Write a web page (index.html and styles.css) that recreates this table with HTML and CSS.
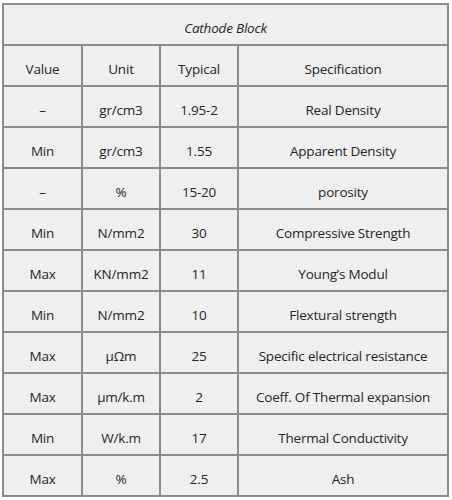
FILE: index.html
```html
<!DOCTYPE html>
<html lang="en">
<head>
  <meta charset="UTF-8">
  <meta name="viewport" content="width=device-width, initial-scale=1.0">
  <title>Cathode Block</title>
  <link rel="stylesheet" href="styles.css">
</head>
<body>
  <table class="spec-table">
    <colgroup>
      <col class="col-value">
      <col class="col-unit">
      <col class="col-typical">
      <col class="col-spec">
    </colgroup>
    <tr>
      <th class="title" colspan="4">Cathode Block</th>
    </tr>
    <tr>
      <td>Value</td>
      <td>Unit</td>
      <td>Typical</td>
      <td>Specification</td>
    </tr>
    <tr><td>–</td><td>gr/cm3</td><td>1.95-2</td><td>Real Density</td></tr>
    <tr><td>Min</td><td>gr/cm3</td><td>1.55</td><td>Apparent Density</td></tr>
    <tr><td>–</td><td>%</td><td>15-20</td><td>porosity</td></tr>
    <tr><td>Min</td><td>N/mm2</td><td>30</td><td>Compressive Strength</td></tr>
    <tr><td>Max</td><td>KN/mm2</td><td>11</td><td>Young’s Modul</td></tr>
    <tr><td>Min</td><td>N/mm2</td><td>10</td><td>Flextural strength</td></tr>
    <tr><td>Max</td><td>µΩm</td><td>25</td><td>Specific electrical resistance</td></tr>
    <tr><td>Max</td><td>µm/k.m</td><td>2</td><td>Coeff. Of Thermal expansion</td></tr>
    <tr><td>Min</td><td>W/k.m</td><td>17</td><td>Thermal Conductivity</td></tr>
    <tr><td>Max</td><td>%</td><td>2.5</td><td>Ash</td></tr>
  </table>
</body>
</html>
```

FILE: styles.css
```css
* {
  margin: 0;
  padding: 0;
  box-sizing: border-box;
}

body {
  font-family: "Open Sans", Arial, sans-serif;
  background: #fff;
  padding: 3px 3px 0 2px;
}

.spec-table {
  width: 447px;
  border-collapse: collapse;
  table-layout: fixed;
  background: #efefef;
  color: #262626;
  font-size: 13.5px;
}

.col-value { width: 79px; }
.col-unit { width: 78px; }
.col-typical { width: 78px; }

.spec-table th,
.spec-table td {
  height: 41px;
  padding-top: 7px;
  border: 2px solid #8c8c8c;
  text-align: center;
  vertical-align: middle;
  font-weight: normal;
  letter-spacing: -0.2px;
  white-space: nowrap;
}

.spec-table .title {
  height: 41px;
  font-style: italic;
}
```
